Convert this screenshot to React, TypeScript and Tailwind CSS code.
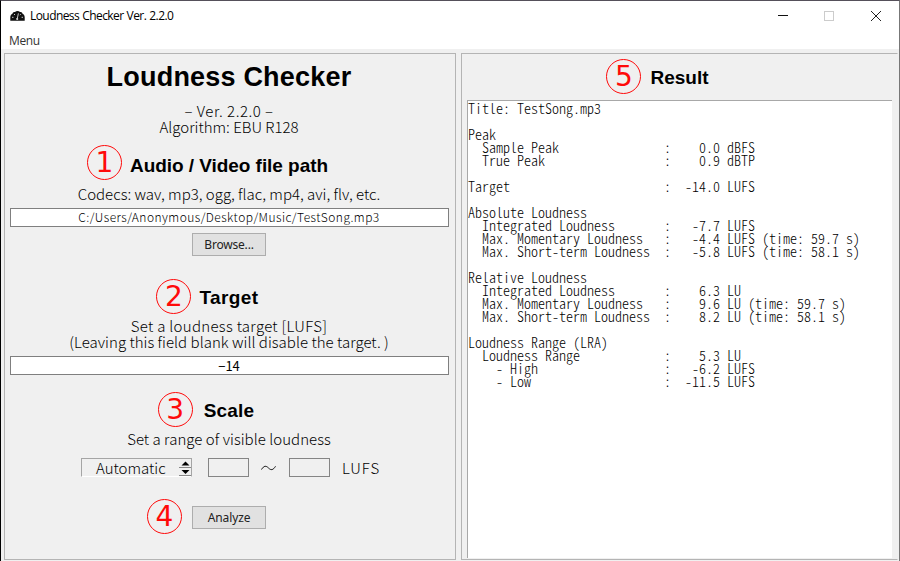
import type { ReactNode } from "react";

const label = "flex h-4 shrink-0 items-center whitespace-pre font-['Noto_Sans_CJK_JP',sans-serif] text-[15px] font-light leading-none text-black";
const heading = "relative flex h-7 shrink-0 items-center whitespace-pre font-['Liberation_Sans',sans-serif] text-[19px] font-bold leading-none text-black";
const entry = "flex h-[19px] w-[439px] shrink-0 items-center justify-center whitespace-pre border border-[#7f7f7f] bg-white font-['Noto_Sans_CJK_JP',sans-serif] leading-none text-black";
const button = "flex h-[23px] w-[74px] shrink-0 items-center justify-center border border-[#adadad] bg-[#e1e1e1] font-['Noto_Sans','Open_Sans',sans-serif] text-[12px] leading-none text-[#222]";

function Step({ n, place }: { n: number; place: string }) {
  return (
    <span className={"absolute flex size-[35px] items-center justify-center rounded-full border-[1.3px] border-[#ff0a0a] font-['DejaVu_Sans',sans-serif] text-[28px] font-normal leading-none tracking-normal text-[#ff0a0a] " + place}>
      {n}
    </span>
  );
}

function Heading({ children, n, place, track }: { children: ReactNode; n: number; place: string; track: string }) {
  return (
    <h2 className={heading + " " + track}>
      {children}
      <Step n={n} place={place} />
    </h2>
  );
}

const result = `Title: TestSong.mp3

Peak
  Sample Peak               :    0.0 dBFS
  True Peak                 :    0.9 dBTP

Target                      :  -14.0 LUFS

Absolute Loudness
  Integrated Loudness       :   -7.7 LUFS
  Max. Momentary Loudness   :   -4.4 LUFS (time: 59.7 s)
  Max. Short-term Loudness  :   -5.8 LUFS (time: 58.1 s)

Relative Loudness
  Integrated Loudness       :    6.3 LU
  Max. Momentary Loudness   :    9.6 LU (time: 59.7 s)
  Max. Short-term Loudness  :    8.2 LU (time: 58.1 s)

Loudness Range (LRA)
  Loudness Range            :    5.3 LU
    - High                  :   -6.2 LUFS
    - Low                   :  -11.5 LUFS`;

function GaugeIcon() {
  return (
    <svg className="h-[12px] w-[15px]" viewBox="0 0 15 12">
      <path d="M0.3 10.7V7.2C.4 5.2 1.2 4.2 2.3 3.9C2.7 2.4 4 1.8 5 2C6.2.7 8.8.7 10 2C11 1.8 12.3 2.4 12.7 3.9C13.8 4.2 14.6 5.2 14.7 7.2V10.7Z" fill="#111" />
      <path d="M7.3 8.5L8.4 3.4M2 7.3h1.5M11.6 7.3H13M4 4l1 1M10.7 4.2l-.8.9" stroke="#ddd" strokeWidth=".9" />
      <circle cx="7.2" cy="9" r="1.1" fill="#ddd" />
    </svg>
  );
}

export default function App() {
  return (
    <div className="flex h-[561px] w-[900px] flex-col overflow-hidden border-t border-r border-l border-t-[#55505a] border-r-[#777] border-l-black bg-[#f0f0f0]">
      <header className="flex h-[30px] shrink-0 items-center bg-white pl-[9px]">
        <GaugeIcon />
        <span className="ml-[5px] whitespace-pre pb-px font-['Open_Sans',sans-serif] text-[12px] leading-none tracking-[-0.57px] [word-spacing:0.5px] text-black">Loudness Checker Ver. 2.2.0</span>
        <svg className="ml-auto h-[14px] w-[106px]" viewBox="0 0 106 14" fill="none">
          <path d="M0 6.5h10" stroke="#111" />
          <rect x="46.5" y="2.5" width="9" height="9" stroke="#ccc" />
          <path d="M93 2l10 10M103 2L93 12" stroke="#222" />
        </svg>
        <span className="w-[15px]" />
      </header>
      <nav className="flex h-[18px] shrink-0 items-center bg-white pt-[2px] pl-2 font-['Open_Sans',sans-serif] text-[12px] leading-none tracking-[-0.4px] text-[#333]">Menu</nav>
      <div className="flex h-[512px] shrink-0 pt-1 pl-[3px]">
        <section className="flex h-[507px] w-[452px] shrink-0 flex-col items-center border border-[#b4b4b4] pr-[2px]">
          <h1 className="flex h-[46px] shrink-0 items-center whitespace-pre font-['Liberation_Sans',sans-serif] text-[27px] font-bold leading-none tracking-[0.2px] text-black">Loudness Checker</h1>
          <p className={label + " mt-[2px] tracking-[0.5px]"}>– Ver. 2.2.0 –</p>
          <p className={label}>Algorithm: EBU R128</p>
          <div className="mt-[17px]"><Heading n={1} place="-left-[43px] -top-[6px]" track="tracking-[-0.05px]">Audio / Video file path</Heading></div>
          <p className={label + " mt-1.5"}>Codecs: wav, mp3, ogg, flac, mp4, avi, flv, etc.</p>
          <div className={entry + " mt-[7px] pb-px text-[12px] font-light tracking-[0.45px]"}>C:/Users/Anonymous/Desktop/Music/TestSong.mp3</div>
          <button className={button + " mt-1.5 tracking-[-0.2px]"}>Browse...</button>
          <div className="mt-[27px]"><Heading n={2} place="-left-[43px] -top-[4px]" track="tracking-[0.4px]">Target</Heading></div>
          <p className={label + " mt-1.5 tracking-[0.3px]"}>Set a loudness target [LUFS]</p>
          <p className={label + " tracking-[0.03px]"}>(Leaving this field blank will disable the target. )</p>
          <div className={entry + " mt-[7px] pb-px text-[13px]"}>−14</div>
          <div className="mt-[21px]"><Heading n={3} place="-left-[46px] -top-[4px]" track="tracking-[0.2px]">Scale</Heading></div>
          <p className={label + " mt-[6px] tracking-[0.04px]"}>Set a range of visible loudness</p>
          <div className="mt-[12px] flex h-[19px] w-[450px] shrink-0 items-center self-start pl-[76px]">
            <div className="flex h-[19px] w-[111px] shrink-0 items-center border border-t-[#a5a5a5] border-r-[#a5a5a5] border-b-white border-l-[#a5a5a5] pl-[14px]">
              <span className={label}>Automatic</span>
              <svg className="ml-auto h-[17px] w-[12px]" viewBox="0 0 12 17">
                <path d="M2.5 6.5L6.5 2.5L10.5 6.5ZM2.5 11L6.5 15L10.5 11Z" fill="#000" />
                <path d="M0 8.5h12M0 16.5h12" stroke="#888" />
              </svg>
            </div>
            <div className="ml-4 h-[19px] w-[41px] shrink-0 border border-[#858585]" />
            <svg className="ml-3 h-[8px] w-[15px] shrink-0" viewBox="0 0 15 8" fill="none"><path d="M.5 5.5C3 1.5 5 1.5 7.5 4S12 6.3 14.5 2.3" stroke="#111" /></svg>
            <div className="ml-[13px] h-[19px] w-[41px] shrink-0 border border-[#858585]" />
            <span className={label + " ml-3 tracking-[0.9px]"}>LUFS</span>
          </div>
          <div className="relative mt-[29px]">
            <button className={button + " tracking-[-0.1px]"}>Analyze</button>
            <Step n={4} place="-left-[45px] -top-[7px]" />
          </div>
        </section>
        <section className="ml-[5px] flex h-[507px] w-[437px] shrink-0 flex-col items-center border border-[#b4b4b4] border-r-[#f0f0f0]">
          <div className="mt-[9px]"><Heading n={5} place="-left-[44px] -top-[4px]" track="tracking-normal">Result</Heading></div>
          <pre className="mt-[9px] h-[458px] w-[425px] shrink-0 border border-r-0 border-b-0 border-[#a8a8a8] bg-white pt-px font-['Noto_Sans_CJK_JP',sans-serif] text-[14px] font-light leading-[13px] text-black [font-feature-settings:'hwid']">{result}</pre>
        </section>
      </div>
    </div>
  );
}
